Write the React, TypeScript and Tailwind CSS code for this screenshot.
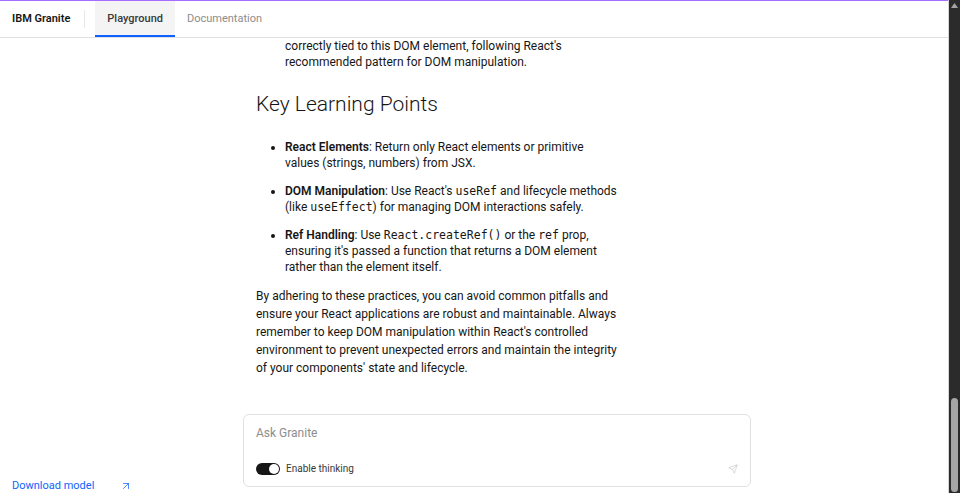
import { ArrowUpRight, Send } from "lucide-react";

const sans = { fontFamily: 'Roboto, "Noto Sans", sans-serif' };

const Code = ({ children }: { children: string }) => (
  <code className="font-['DejaVu_Sans_Mono',monospace] text-[11.5px]">{children}</code>
);

const App = () => {
  return (
    <div className="flex h-screen overflow-hidden bg-white text-[#161616]" style={sans}>
      <div className="flex min-w-0 flex-1 flex-col">
        <header className="flex h-[38px] shrink-0 items-stretch border-t border-b border-t-[#a56eff] border-b-[#e0e0e0] bg-white">
          <div className="flex items-center pl-3 pr-[14px] text-[11px] font-semibold">IBM Granite</div>
          <div className="my-[9px] w-px bg-[#e8e8e8]" />
          <div className="ml-[10px] flex items-center border-b-2 border-[#0f62fe] bg-[#f4f4f4] px-3 pt-[2px] text-[11px] font-medium text-[#393939]">
            Playground
          </div>
          <div className="flex items-center px-3 text-[11px] text-[#8d8d8d]">Documentation</div>
        </header>

        <div className="flex min-h-0 flex-1 flex-col justify-end overflow-hidden">
          <div className="ml-[243px] w-[508px] px-[13px] pb-[37px]">
            <div className="mb-6 flex justify-end">
              <div className="max-w-[320px] rounded-lg bg-[#f4f4f4] px-4 py-3 text-[12px] leading-[18px]">
                I'm getting "Objects are not valid as a React child" when I try to render an element I built
                with document.createElement. How do I fix it?
              </div>
            </div>

            <div className="w-[420px]">
              <p className="text-[12px] leading-[18px]">
                This error appears because React can only render React elements, strings, numbers and
                arrays of those. A DOM node created outside of React is a plain object, so React refuses to
                place it in the tree. Here is how to approach the fix:
              </p>

              <h2 className="mt-6 mb-4 text-[21px] font-light">Steps to Resolve</h2>
              <ol className="list-decimal pl-[29px] text-[12px] leading-4">
                <li className="mb-3">
                  <span className="font-semibold">Check the Return Value</span>: Make sure the component's
                  render function only returns valid React nodes, never a raw DOM node.
                </li>
                <li className="mb-3">
                  <span className="font-semibold">Avoid Direct Mutation</span>: Let React manage the tree
                  through state and props so reconciliation stays predictable.
                </li>
                <li>
                  <span className="font-semibold">Ref Callback</span>: Attach a ref callback to the element
                  you render and make sure the ref is
                  <br />
                  correctly tied to this DOM element, following React's
                  <br />
                  recommended pattern for DOM manipulation.
                </li>
              </ol>

              <h2 className="mt-5 mb-[21px] text-[21px] font-light leading-7">Key Learning Points</h2>
              <ul className="list-disc pl-[29px] text-[12px] leading-4">
                <li className="mb-3">
                  <span className="font-semibold">React Elements</span>: Return only React elements or
                  primitive
                  <br />
                  values (strings, numbers) from JSX.
                </li>
                <li className="mb-3">
                  <span className="font-semibold">DOM Manipulation</span>: Use React's <Code>useRef</Code> and
                  lifecycle methods
                  <br />
                  (like <Code>useEffect</Code>) for managing DOM interactions safely.
                </li>
                <li>
                  <span className="font-semibold">Ref Handling</span>: Use <Code>React.createRef()</Code> or
                  the <Code>ref</Code> prop,
                  <br />
                  ensuring it's passed a function that returns a DOM element
                  <br />
                  rather than the element itself.
                </li>
              </ul>

              <p className="mt-3 text-[12px] leading-[18px]">
                By adhering to these practices, you can avoid common pitfalls and
                <br />
                ensure your React applications are robust and maintainable. Always
                <br />
                remember to keep DOM manipulation within React's controlled
                <br />
                environment to prevent unexpected errors and maintain the integrity
                <br />
                of your components' state and lifecycle.
              </p>
            </div>
          </div>
        </div>

        <div className="flex shrink-0 items-end bg-white">
          <div className="-mb-[1px] w-[243px] pl-3">
            <a className="flex w-[120px] items-center justify-between text-[11px] text-[#0f62fe]" href="#">
              Download model
              <ArrowUpRight size={12} strokeWidth={1.5} />
            </a>
          </div>
          <div className="w-[508px] pb-[6px]">
            <div className="flex h-[73px] flex-col justify-between rounded-md border border-[#e0e0e0] px-3 pt-[9px] pb-[10px]">
              <div className="text-[12px] text-[#8d8d8d]">Ask Granite</div>
              <div className="flex items-center justify-between">
                <div className="flex items-center gap-[6px]">
                  <div className="flex h-3 w-6 items-center justify-end rounded-full bg-[#161616] px-[1px]">
                    <div className="h-[10px] w-[10px] rounded-full bg-white" />
                  </div>
                  <span className="text-[10px] text-[#393939]">Enable thinking</span>
                </div>
                <Send size={10} strokeWidth={1.5} className="text-[#c6c6c6]" />
              </div>
            </div>
          </div>
        </div>
      </div>

      {/* scrollbar */}
      <div className="flex w-[12px] shrink-0 flex-col items-center justify-between border-l border-[#d6d6d6] bg-[#2b2b2b]">
        <svg width="7" height="5" viewBox="0 0 7 5" className="mt-[3px]">
          <polygon points="3.5,0 7,5 0,5" fill="#a3a3a3" />
        </svg>
        <div className="mb-[1px] h-[94px] w-[7px] rounded-full bg-[#a6a6a6]" />
      </div>
    </div>
  );
};

export default App;
